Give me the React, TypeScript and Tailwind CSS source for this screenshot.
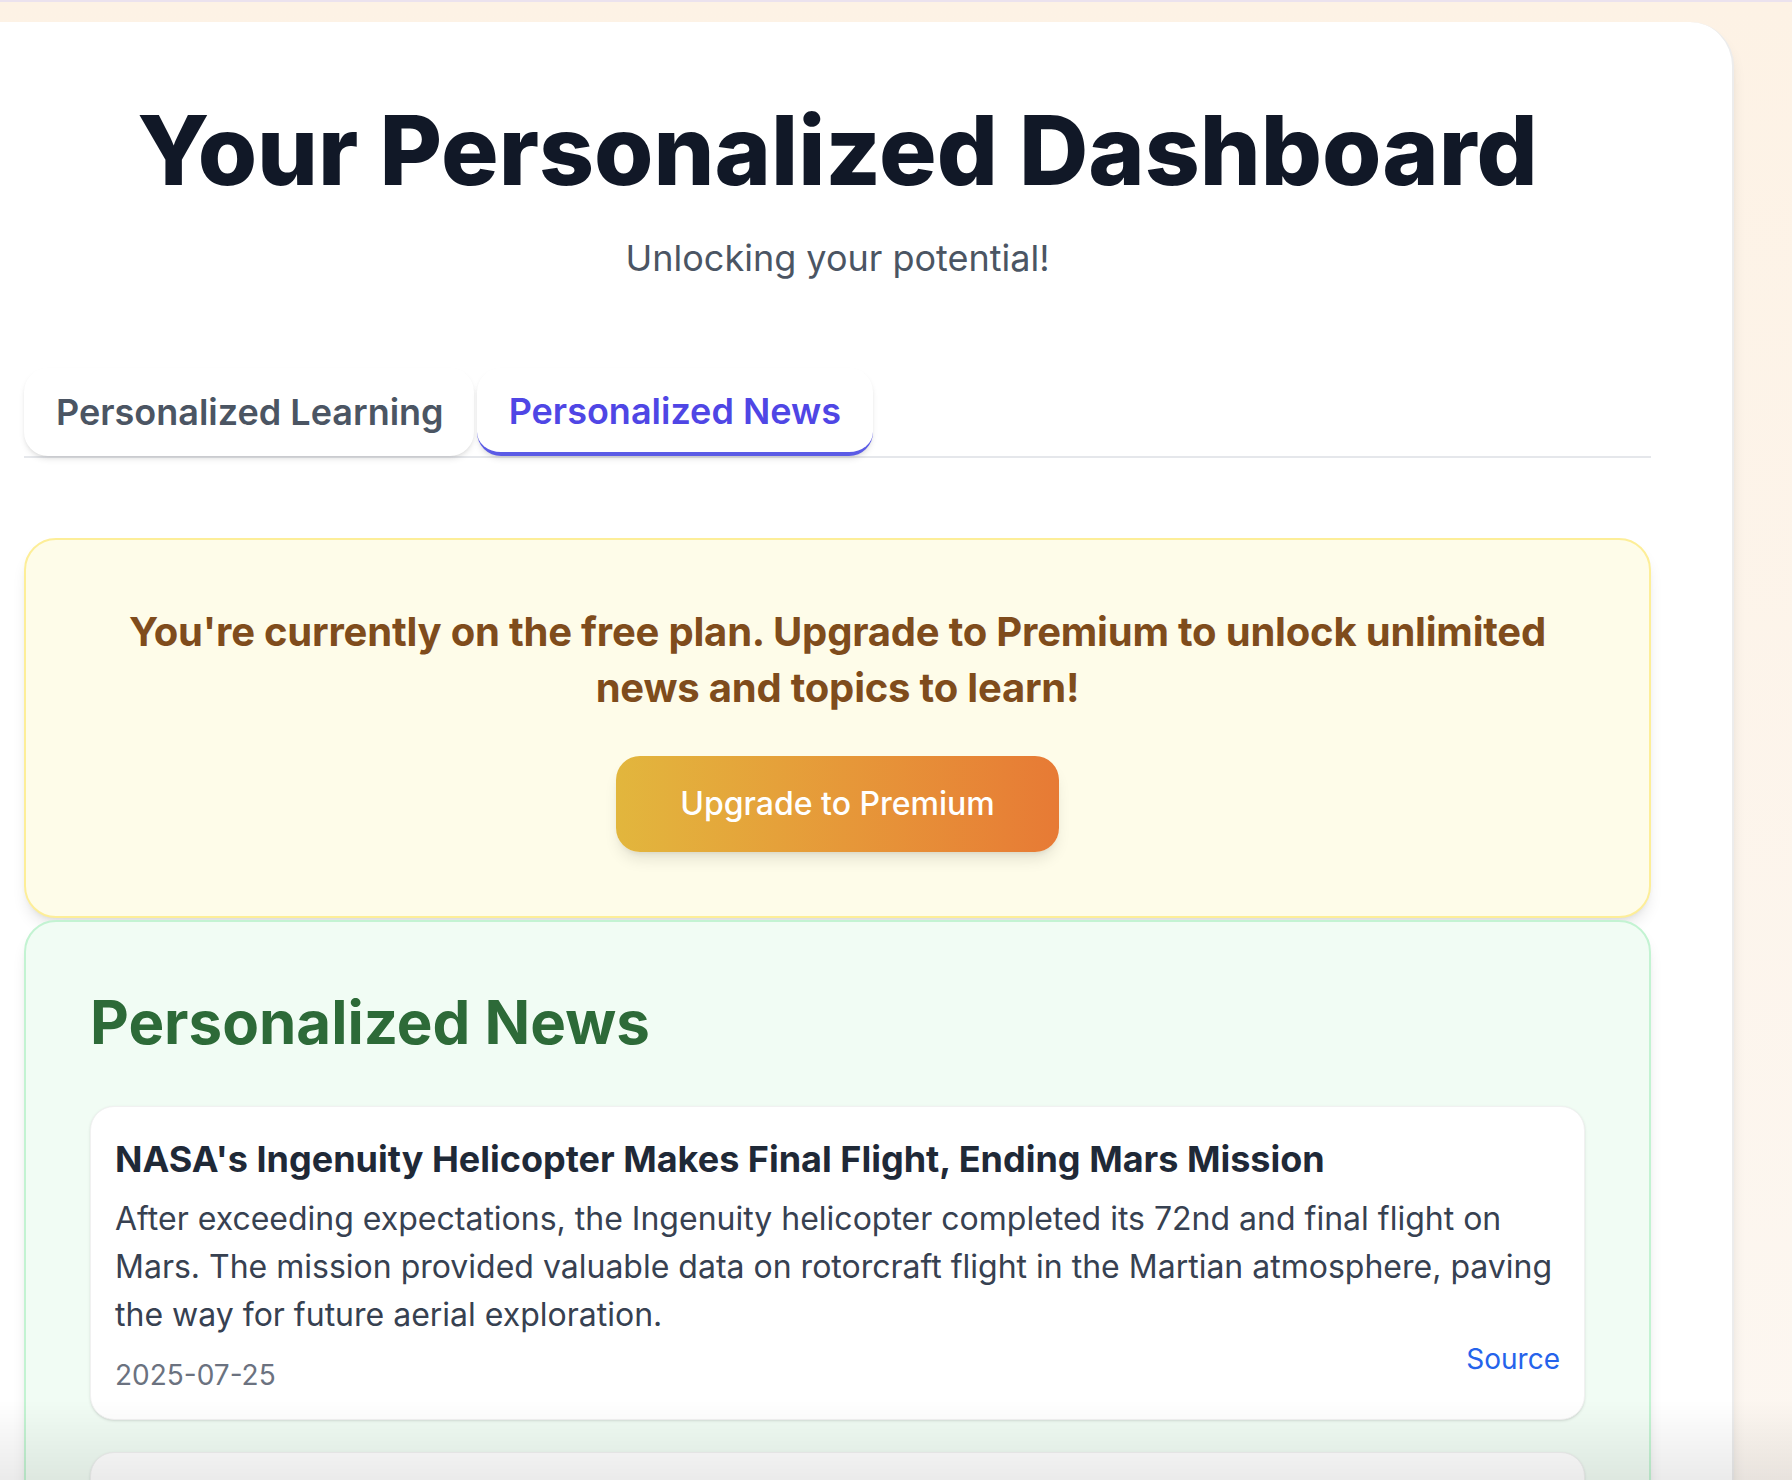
const news = [
  {
    title: "NASA's Ingenuity Helicopter Makes Final Flight, Ending Mars Mission",
    text: "After exceeding expectations, the Ingenuity helicopter completed its 72nd and final flight on Mars. The mission provided valuable data on rotorcraft flight in the Martian atmosphere, paving the way for future aerial exploration.",
    date: "2025-07-25",
  },
  {
    title: "New Study Links Sleep Quality to Long-Term Memory Retention",
    text: "Researchers found that consistent deep sleep plays a key role in how the brain stores and recalls new information over time.",
    date: "2025-07-24",
  },
]

function App() {
  return (
    <div className="min-h-screen bg-gradient-to-b from-[#fdf2e5] to-[#fcf8f4] font-['Inter',sans-serif]">
      <div className="h-[2px] bg-[#ebe2ee]" />

      <div className="pt-[20px] pr-[58px]">
        {/* main card */}
        <div className="bg-white rounded-tr-[44px] border-r-2 border-[#ececec] shadow-lg pt-[80px] pl-6 pr-[80px] pb-20">
          <div className="w-[1627px]">
            <h1 className="text-[96px] leading-[96px] font-extrabold text-[#111827] text-center">
              Your Personalized Dashboard
            </h1>
            <p className="mt-8 text-[36px] leading-[56px] text-[#4b5563] text-center">Unlocking your potential!</p>

            {/* tabs */}
            <div className="mt-[82px] flex gap-[3px] border-b-2 border-[#e5e7eb]">
              <button className="pl-8 pr-[30px] py-4 rounded-3xl bg-white shadow-md text-[36px] leading-[56px] font-semibold text-[#4b5563]">
                Personalized Learning
              </button>
              <button className="px-8 pt-[14px] pb-3 rounded-3xl bg-white shadow-md border-b-4 border-[#5b5be6] text-[36px] leading-[56px] font-semibold text-[#4f46e5]">
                Personalized News
              </button>
            </div>

            {/* upgrade banner */}
            <div className="mt-20 rounded-[32px] border-2 border-[#fdee98] bg-[#fefce9] shadow-lg px-16 py-16 flex flex-col items-center">
              <p className="text-[40px] leading-[56px] font-bold tracking-[-0.005em] text-[#7f4c1c] text-center">
                You're currently on the free plan. Upgrade to Premium to unlock unlimited news and topics to learn!
              </p>
              <button className="mt-10 px-16 py-6 rounded-3xl bg-gradient-to-r from-[#e2b63d] to-[#e77a35] text-white text-[32px] leading-[48px] font-medium shadow-lg">
                Upgrade to Premium
              </button>
            </div>

            {/* news */}
            <div className="mt-[2px] rounded-[32px] border-2 border-[#c3f3d2] bg-[#f1fcf4] shadow-lg p-16">
              <h2 className="text-[60px] leading-[72px] font-bold text-[#2d6a38] mb-12">Personalized News</h2>

              <div className="flex flex-col gap-8">
                {news.map((item, i) => (
                  <div key={i} className="bg-white rounded-3xl border border-[#f1f1f1] shadow-sm p-6">
                    <h3 className="text-[36px] leading-[56px] font-bold text-[#1f2937] mb-2">{item.title}</h3>
                    <p className="text-[32px] leading-[48px] text-[#374151]">{item.text}</p>
                    <div className="flex justify-between items-start">
                      <span className="mt-4 text-[28px] leading-[40px] text-[#6b7280]">{item.date}</span>
                      <a className="text-[28px] leading-[40px] text-[#2563eb]">Source</a>
                    </div>
                  </div>
                ))}
              </div>
            </div>
          </div>
        </div>
      </div>

      {/* bottom fade */}
      <div className="fixed bottom-0 inset-x-0 h-[80px] bg-gradient-to-b from-transparent to-black/[0.08] pointer-events-none" />
    </div>
  )
}

export default App
